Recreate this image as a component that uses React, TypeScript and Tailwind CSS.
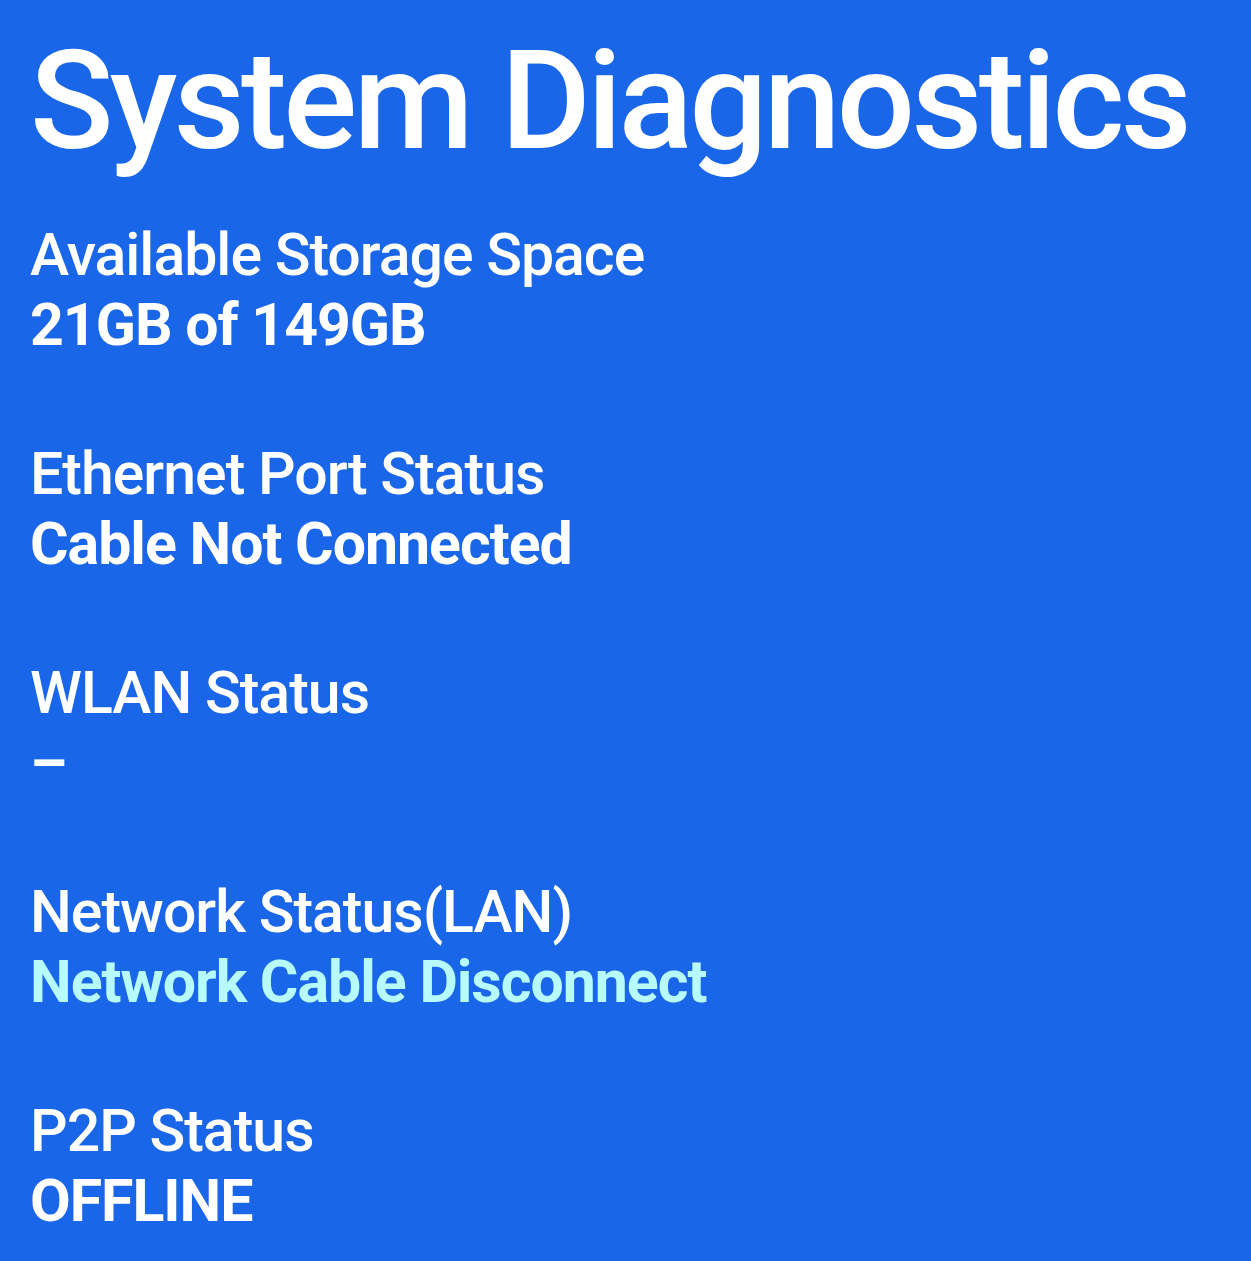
const rows = [
  { label: 'Available Storage Space', value: '21GB of 149GB', color: 'text-white' },
  { label: 'Ethernet Port Status', value: 'Cable Not Connected', color: 'text-white' },
  { label: 'WLAN Status', value: '–', color: 'text-white' },
  { label: 'Network Status(LAN)', value: 'Network Cable Disconnect', color: 'text-[#b8fbff]' },
  { label: 'P2P Status', value: 'OFFLINE', color: 'text-white' },
];

export default function App() {
  return (
    <div className="min-h-screen w-full bg-[#1a66e8] pl-[30px] pt-[32px] font-['Roboto','Liberation_Sans',sans-serif] text-white">
      <h1 className="text-[138px] leading-none font-medium tracking-[-3.7px]">System Diagnostics</h1>
      <div className="mt-[50px] flex flex-col gap-[79px]">
        {rows.map((r) => (
          <div key={r.label} className="flex flex-col">
            <div className="text-[59px] leading-[70px] font-medium tracking-[-1px]">{r.label}</div>
            <div className={`text-[59px] leading-[70px] font-bold tracking-[-1px] ${r.color}`}>{r.value}</div>
          </div>
        ))}
      </div>
    </div>
  );
}
